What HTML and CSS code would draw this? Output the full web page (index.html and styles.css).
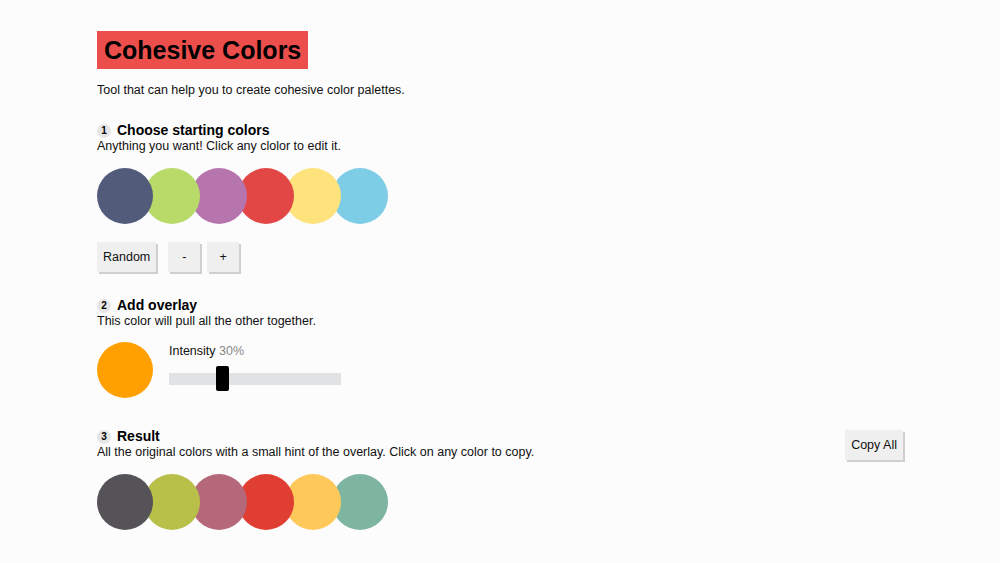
FILE: index.html
```html
<!DOCTYPE html>
<html>
<head>
<link rel="stylesheet" href="styles.css">
</head>
<body>
<div class="page">
  <h1 class="title">Cohesive Colors</h1>
  <p class="intro">Tool that can help you to create cohesive color palettes.</p>

  <div class="section">
    <h2 class="stepTitle"><span class="badge">1</span>Choose starting colors</h2>
    <p class="hint">Anything you want! Click any clolor to edit it.</p>
    <div class="swatches">
      <div class="swatch" style="background: #525c7a;"></div>
      <div class="swatch" style="background: #b7da69;"></div>
      <div class="swatch" style="background: #b675ad;"></div>
      <div class="swatch" style="background: #e24745;"></div>
      <div class="swatch" style="background: #fee27c;"></div>
      <div class="swatch" style="background: #7ecde6;"></div>
    </div>
    <div class="controls">
      <button class="btn">Random</button>
      <button class="btn btnSmall btnMinus">-</button>
      <button class="btn btnSmall">+</button>
    </div>
  </div>

  <div class="section overlaySection">
    <h2 class="stepTitle"><span class="badge">2</span>Add overlay</h2>
    <p class="hint">This color will pull all the other together.</p>
    <div class="overlayRow">
      <div class="swatch" style="background: #ffa000;"></div>
      <div class="intensity">
        <div class="intensityLabel">Intensity <span class="value">30%</span></div>
        <div class="slider">
          <div class="thumb"></div>
        </div>
      </div>
    </div>
  </div>

  <div class="section resultSection">
    <div class="resultHead">
      <div>
        <h2 class="stepTitle"><span class="badge">3</span>Result</h2>
        <p class="hint">All the original colors with a small hint of the overlay. Click on any color to copy.</p>
      </div>
      <button class="btn copyBtn">Copy All</button>
    </div>
    <div class="swatches">
      <div class="swatch" style="background: #555357;"></div>
      <div class="swatch" style="background: #b8c04a;"></div>
      <div class="swatch" style="background: #b56879;"></div>
      <div class="swatch" style="background: #e03e33;"></div>
      <div class="swatch" style="background: #fec95a;"></div>
      <div class="swatch" style="background: #7db5a0;"></div>
    </div>
  </div>
</div>
</body>
</html>
```

FILE: styles.css
```css
html, body {
  margin: 0;
  padding: 0;
  background: #fcfcfc;
  color: #111;
  font-family: "Liberation Sans", Arial, sans-serif;
}

.page {
  width: 806px;
  margin: 0 auto;
  padding-top: 31px;
}

.title {
  display: inline-block;
  margin: 0;
  padding: 0 7px;
  height: 38px;
  line-height: 38px;
  background: #ec4e4c;
  font-size: 25px;
  font-weight: bold;
  color: #000;
}

.intro {
  margin: 13px 0 0;
  font-size: 12.5px;
  line-height: 16px;
}

.section {
  margin-top: 24px;
}

.overlaySection {
  margin-top: 25px;
}

.stepTitle {
  margin: 0;
  display: flex;
  align-items: center;
  font-size: 14px;
  line-height: 17px;
  font-weight: bold;
  color: #000;
}

.badge {
  display: inline-block;
  width: 14px;
  height: 14px;
  line-height: 14px;
  border-radius: 50%;
  background: #e6e6e6;
  font-size: 10px;
  text-align: center;
  margin-right: 6px;
}

.hint {
  margin: 0;
  font-size: 12.5px;
  line-height: 15px;
}

.swatches {
  display: flex;
  margin-top: 14px;
}

.swatch {
  width: 56px;
  height: 56px;
  border-radius: 50%;
  flex-shrink: 0;
  position: relative;
}

.swatches .swatch {
  margin-right: -9px;
}

.swatches .swatch:nth-child(1) { z-index: 6; }
.swatches .swatch:nth-child(2) { z-index: 5; }
.swatches .swatch:nth-child(3) { z-index: 4; }
.swatches .swatch:nth-child(4) { z-index: 3; }
.swatches .swatch:nth-child(5) { z-index: 2; }
.swatches .swatch:nth-child(6) { z-index: 1; }

.controls {
  display: flex;
  margin-top: 18px;
}

.btn {
  height: 30px;
  padding: 0 6px;
  border: none;
  background: #efefef;
  box-shadow: 2px 2px 0 #cfcfcf;
  font-family: "Liberation Sans", Arial, sans-serif;
  font-size: 12.5px;
  color: #111;
  cursor: pointer;
}

.btnSmall {
  width: 32px;
  margin-left: 7px;
}

.btnMinus {
  margin-left: 12px;
}

.overlayRow {
  display: flex;
  margin-top: 13px;
}

.intensity {
  margin-left: 16px;
  padding-top: 1px;
}

.intensityLabel {
  font-size: 12.5px;
  line-height: 16px;
}

.value {
  color: #888;
}

.slider {
  position: relative;
  width: 172px;
  height: 12px;
  margin-top: 14px;
  background: #e1e2e3;
}

.thumb {
  position: absolute;
  left: 47px;
  top: -7px;
  width: 13px;
  height: 25px;
  border-radius: 2px;
  background: #000;
}

.resultSection {
  margin-top: 30px;
}

.resultHead {
  display: flex;
  justify-content: space-between;
  align-items: flex-start;
}

.copyBtn {
  margin-top: 2px;
  margin-right: 0;
}
```
